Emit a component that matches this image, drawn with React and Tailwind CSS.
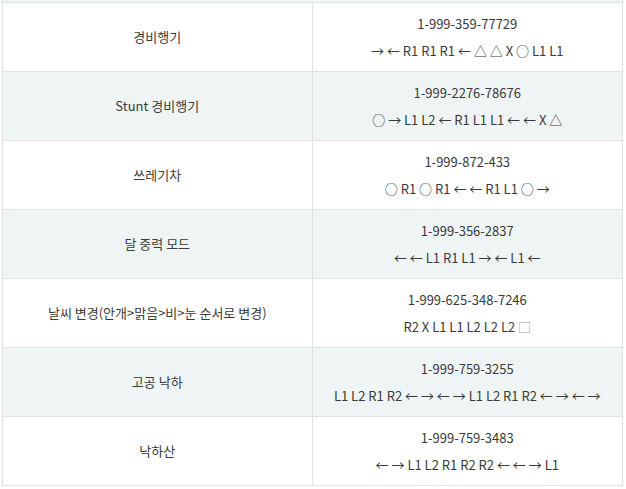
import React from "react"

const rows = [
    { name: "경비행기", code: "1-999-359-77729", keys: "→ ← R1 R1 R1 ← △ △ X ○ L1 L1" },
    { name: "Stunt 경비행기", code: "1-999-2276-78676", keys: "○ → L1 L2 ← R1 L1 L1 ← ← X △" },
    { name: "쓰레기차", code: "1-999-872-433", keys: "○ R1 ○ R1 ← ← R1 L1 ○ →" },
    { name: "달 중력 모드", code: "1-999-356-2837", keys: "← ← L1 R1 L1 → ← L1 ←" },
    { name: "날씨 변경(안개>맑음>비>눈 순서로 변경)", code: "1-999-625-348-7246", keys: "R2 X L1 L1 L2 L2 L2", square: true },
    { name: "고공 낙하", code: "1-999-759-3255", keys: "L1 L2 R1 R2 ← → ← → L1 L2 R1 R2 ← → ← →" },
    { name: "낙하산", code: "1-999-759-3483", keys: "← → L1 L2 R1 R2 R2 ← ← → L1" },
]

export default function App() {
    return (
        <div className="w-[626px] h-[489px] overflow-hidden bg-white" style={{ fontFamily: "'Noto Sans CJK KR', 'Noto Sans', sans-serif" }}>
            <div className="ml-[2px] w-[621px] border-x border-[#e2e2e2] text-[13px] text-[#3a3a3a]">
                {/* previous row, scrolled off */}
                <div className="h-[3px] bg-[#eef5f4] border-b border-[#e2e2e2]" />
                {rows.map((r, i) => (
                    <div
                        key={i}
                        className={`grid grid-cols-2 h-[69px] border-b border-[#e2e2e2] ${i % 2 === 1 ? "bg-[#eef5f4]" : "bg-white"}`}
                    >
                        <div className="flex items-center justify-center border-r border-[#e2e2e2]">{r.name}</div>
                        <div className="flex flex-col items-center justify-center leading-[27px]">
                            <span>{r.code}</span>
                            <span>
                                {r.keys}
                                {r.square && <span className="text-[#9a9a9a]"> □</span>}
                            </span>
                        </div>
                    </div>
                ))}
            </div>
        </div>
    )
}
